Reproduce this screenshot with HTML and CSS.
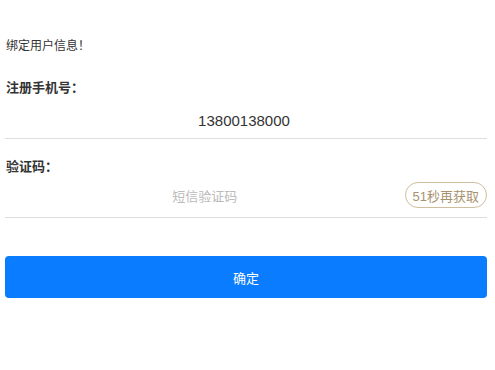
FILE: index.html
```html
<!DOCTYPE html>
<html lang="zh-CN">
<head>
    <meta charset="UTF-8">
    <meta name="viewport" content="width=device-width, initial-scale=1.0">
    <title>绑定用户信息</title>
    <link rel="stylesheet" href="styles.css">
</head>
<body>
    <div class="container">
        <p class="notice">绑定用户信息！</p>

        <form class="bind-form">
            <div class="form-group">
                <label>注册手机号：</label>
                <div class="form-row">
                    <input type="text" class="form-input phone-input" value="13800138000" readonly>
                </div>
            </div>

            <div class="form-group">
                <label>验证码：</label>
                <div class="form-row code-row">
                    <input type="text" class="form-input" placeholder="短信验证码">
                    <button type="button" class="code-btn">51秒再获取</button>
                </div>
            </div>

            <button type="submit" class="submit-btn">确定</button>
        </form>
    </div>
</body>
</html>
```

FILE: styles.css
```css
* {
    margin: 0;
    padding: 0;
    box-sizing: border-box;
}

body {
    font-family: "Liberation Sans", "Noto Sans CJK SC", sans-serif;
    background-color: #fff;
    color: #333;
}

.container {
    width: 482px;
    margin-left: 5px;
}

.notice {
    margin-top: 38px;
    padding-left: 1px;
    font-size: 12px;
    line-height: 16px;
}

.form-group {
    margin-top: 25px;
}

.form-group + .form-group {
    margin-top: 19px;
}

.form-group label {
    display: block;
    padding-left: 1px;
    font-size: 13px;
    font-weight: bold;
    line-height: 18px;
}

.form-row {
    display: flex;
    align-items: center;
    padding: 14px 0 7px;
    border-bottom: 1px solid #ddd;
}

.form-input {
    flex: 1;
    min-width: 0;
    border: none;
    outline: none;
    background: none;
    font-family: inherit;
    font-size: 13px;
    line-height: 20px;
    height: 20px;
    text-align: center;
    color: #333;
}

.form-input::placeholder {
    color: #bbb;
}

.phone-input {
    font-size: 15px;
    padding-right: 4px;
}

.code-row {
    padding: 6px 0 9px;
}

.code-row .form-input {
    margin-top: 4px;
}

.code-btn {
    height: 26px;
    padding: 0 7px;
    border: 1px solid #cfbd9e;
    border-radius: 13px;
    background-color: #fff;
    color: #a8926e;
    font-family: inherit;
    font-size: 13px;
    cursor: pointer;
}

.submit-btn {
    display: block;
    width: 100%;
    height: 42px;
    margin-top: 38px;
    border: none;
    border-radius: 4px;
    background-color: #0a7cff;
    color: #fff;
    font-family: inherit;
    font-size: 13px;
    cursor: pointer;
}
```
